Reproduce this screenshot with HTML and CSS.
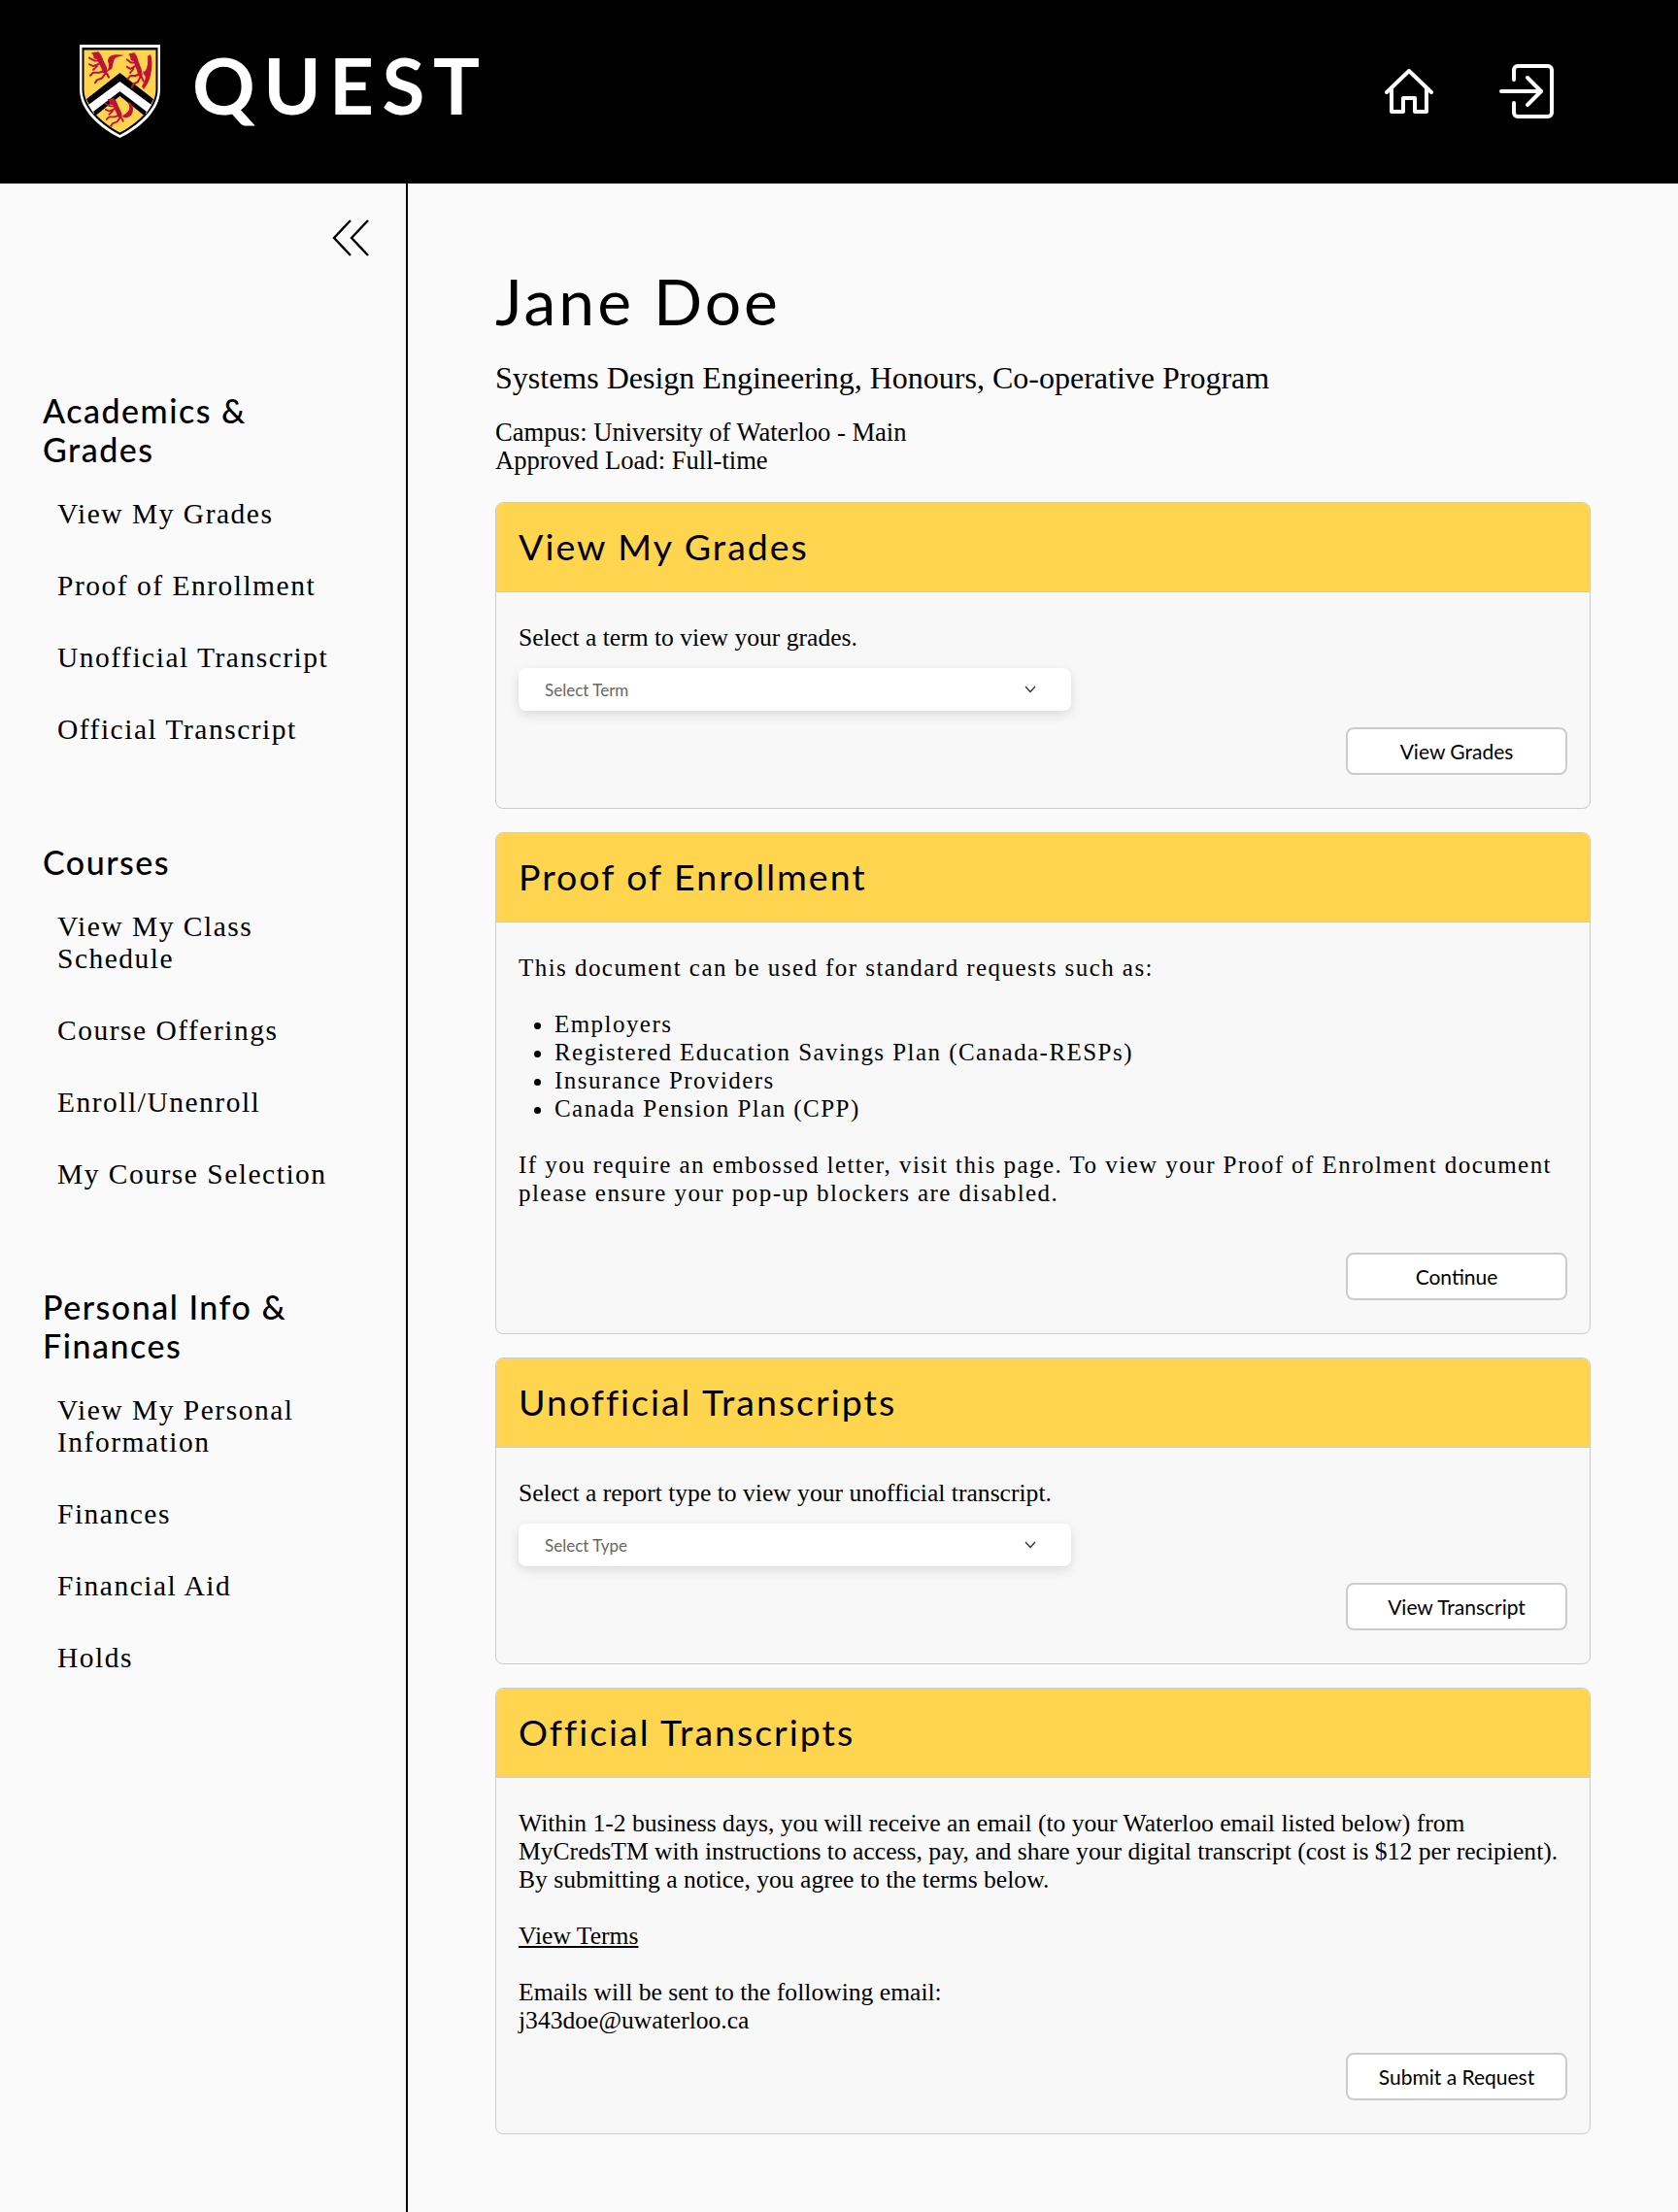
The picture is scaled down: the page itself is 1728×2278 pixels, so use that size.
FILE: index.html
```html
<!DOCTYPE html>
<html lang="en">
<head>
<meta charset="utf-8">
<title>Quest</title>
<link rel="stylesheet" href="styles.css">
</head>
<body>
<header class="topbar">
  <div class="brand">
    <svg class="crest" viewBox="0 0 83 96" width="83" height="96" aria-hidden="true">
      <defs>
        <g id="lion" fill="none" stroke="#bf1238" stroke-linecap="round" stroke-linejoin="round">
          <path d="M13 9C14 14 17 16 18 22" stroke-width="5.500"/>
          <path d="M5 3L11 2L14 6L11 9L7 8" fill="#bf1238" stroke-width="1.500"/>
          <path d="M13 11L7 11L2 8M13 14L6 17L2 15M10 17L6 21" stroke-width="2"/>
          <path d="M18 22L12 24L6 24L3 27M19 24L15 30L10 32L8 35M20 25L22 29" stroke-width="2.200"/>
        </g>
      </defs>
      <path d="M0 0H83V46C83 68 62 86 41.500 96C21 86 0 68 0 46Z" fill="#fff"/>
      <path d="M2.500 3H80.500V46C80.500 66 60 83 41.500 93C23 83 2.500 66 2.500 46Z" fill="#000"/>
      <path d="M4.500 5.500H78.500V46C78.500 65 59 81 41.500 90.500C24 81 4.500 65 4.500 46Z" fill="#ffd54f"/>
      <path d="M41.500 29L76 56L72.500 63L41.500 39L10.500 63L7 56Z" fill="#000"/>
      <path d="M41.500 38L74 62L68.500 71L41.500 49L14.500 71L9 62Z" fill="#fff"/>
      <path d="M41.500 48L69 69L66.500 73L41.500 53L16.500 73L14 69Z" fill="#000"/>
      <use href="#lion" transform="translate(8 6) scale(1 .95)"/>
      <path d="M26 29C30 26 31 22 29 17C29 12 34 9 46 11L38 13C34 15 35 21 33 25" fill="#bf1238"/>
      <use href="#lion" transform="translate(47 7) scale(.85 1.050)"/>
      <path d="M65 27C68 30 71 22 70 12L73 10C76 18 74 33 70 40L66 46L64 43C68 36 69 32 66 31Z" fill="#bf1238"/>
      <use href="#lion" transform="translate(25 54) scale(.9 .85)"/>
      <path d="M44 73C52 70 53 63 49 59C53 58 57 65 54 71C52 75 48 76 45 75Z" fill="#bf1238"/>
    </svg>
    <div class="wordmark">QUEST</div>
  </div>
  <nav class="actions">
    <svg class="icon-home" viewBox="0 0 50 46" width="50" height="46" fill="none" stroke="#fff" stroke-width="4" stroke-linecap="round" stroke-linejoin="round" aria-hidden="true">
      <path d="M2 24L25 2L48 24"/>
      <path d="M7 20V44H19V30H31V44H43V20"/>
    </svg>
    <svg class="icon-exit" viewBox="0 0 56 56" width="56" height="56" fill="none" stroke="#fff" stroke-width="4" stroke-linecap="round" stroke-linejoin="round" aria-hidden="true">
      <path d="M15 16V6A4 4 0 0 1 19 2H50A4 4 0 0 1 54 6V50A4 4 0 0 1 50 54H19A4 4 0 0 1 15 50V40"/>
      <path d="M2 28H43"/>
      <path d="M29 14L43 28L29 42"/>
    </svg>
  </nav>
</header>
<div class="layout">
  <aside class="sidebar">
    <div class="collapse">
      <svg viewBox="0 0 40 38" width="40" height="38" fill="none" stroke="#000" stroke-width="2.400" aria-hidden="true">
        <path d="M19 1L2 19L19 37"/>
        <path d="M37 1L20 19L37 37"/>
      </svg>
    </div>
    <section class="nav-group">
      <h2>Academics &amp; Grades</h2>
      <ul>
        <li>View My Grades</li>
        <li>Proof of Enrollment</li>
        <li>Unofficial Transcript</li>
        <li>Official Transcript</li>
      </ul>
    </section>
    <section class="nav-group">
      <h2>Courses</h2>
      <ul>
        <li>View My Class Schedule</li>
        <li>Course Offerings</li>
        <li>Enroll/Unenroll</li>
        <li>My Course Selection</li>
      </ul>
    </section>
    <section class="nav-group">
      <h2>Personal Info &amp; Finances</h2>
      <ul>
        <li>View My Personal Information</li>
        <li>Finances</li>
        <li>Financial Aid</li>
        <li>Holds</li>
      </ul>
    </section>
  </aside>
  <main class="content">
    <h1>Jane Doe</h1>
    <p class="program">Systems Design Engineering, Honours, Co-operative Program</p>
    <p class="meta">Campus: University of Waterloo - Main<br>Approved Load: Full-time</p>

    <section class="card">
      <h2 class="card-head">View My Grades</h2>
      <div class="card-body">
        <p class="copy lead">Select a term to view your grades.</p>
        <div class="select"><span>Select Term</span><svg viewBox="0 0 12 8" width="12" height="8" fill="none" stroke="#333" stroke-width="1.300" aria-hidden="true"><path d="M1 1L6 6.500L11 1"/></svg></div>
        <div class="row-end"><button class="btn">View Grades</button></div>
      </div>
    </section>

    <section class="card">
      <h2 class="card-head">Proof of Enrollment</h2>
      <div class="card-body">
        <p class="copy spaced">This document can be used for standard requests such as:</p>
        <ul class="copy spaced bullets">
          <li>Employers</li>
          <li>Registered Education Savings Plan (Canada-RESPs)</li>
          <li>Insurance Providers</li>
          <li>Canada Pension Plan (CPP)</li>
        </ul>
        <p class="copy spaced end">If you require an embossed letter, visit this page. To view your Proof of Enrolment document please ensure your pop-up blockers are disabled.</p>
        <div class="row-end wide"><button class="btn">Continue</button></div>
      </div>
    </section>

    <section class="card">
      <h2 class="card-head">Unofficial Transcripts</h2>
      <div class="card-body">
        <p class="copy lead">Select a report type to view your unofficial transcript.</p>
        <div class="select"><span>Select Type</span><svg viewBox="0 0 12 8" width="12" height="8" fill="none" stroke="#333" stroke-width="1.300" aria-hidden="true"><path d="M1 1L6 6.500L11 1"/></svg></div>
        <div class="row-end"><button class="btn">View Transcript</button></div>
      </div>
    </section>

    <section class="card">
      <h2 class="card-head">Official Transcripts</h2>
      <div class="card-body">
        <p class="copy">Within 1-2 business days, you will receive an email (to your Waterloo email listed below) from MyCredsTM with instructions to access, pay, and share your digital transcript (cost is $12 per recipient). By submitting a notice, you agree to the terms below.</p>
        <p class="copy"><a class="link">View Terms</a></p>
        <p class="copy end">Emails will be sent to the following email:<br>j343doe@uwaterloo.ca</p>
        <div class="row-end"><button class="btn">Submit a Request</button></div>
      </div>
    </section>
  </main>
</div>
</body>
</html>
```
FILE: styles.css
```css
* { box-sizing: border-box; }
html, body { margin: 0; padding: 0; }
body {
  background: #fafafa;
  color: #000;
  font-family: "Liberation Serif", serif;
  min-height: 2278px;
  display: flex;
  flex-direction: column;
}
.topbar {
  background: #000;
  height: 189px;
  flex: none;
  display: flex;
  justify-content: space-between;
  padding: 46px 0 0 82px;
}
.brand { display: flex; align-items: flex-start; gap: 33px; }
.wordmark {
  color: #fff;
  font-family: Lato, sans-serif;
  font-weight: 700;
  font-size: 80px;
  line-height: 80px;
  letter-spacing: 8.500px;
  margin-top: 1px;
}
.actions { display: flex; align-items: flex-start; gap: 68px; padding: 20px 128px 0 0; }
.icon-home { margin-top: 5px; }
.layout { flex: 1; display: flex; }
.sidebar {
  width: 420px;
  flex: none;
  border-right: 2px solid #000;
  padding: 37px 0 0 44px;
}
.collapse { display: flex; justify-content: flex-end; padding-right: 36px; height: 38px; margin-bottom: 139px; }
.nav-group { margin-bottom: 89px; }
.nav-group h2 {
  font-family: Lato, sans-serif;
  font-weight: 500;
  font-size: 34px;
  line-height: 40px;
  letter-spacing: 1.500px;
  margin: 0;
  width: 300px;
}
.nav-group ul { list-style: none; margin: 0; padding: 0 0 0 15px; width: 315px; }
.nav-group li {
  font-size: 29.500px;
  line-height: 33px;
  letter-spacing: 1.500px;
  padding-top: 30px;
  padding-bottom: 11px;
}
.content { flex: 1; padding: 78px 0 0 90px; }
.content > * { width: 1128px; }
h1 {
  font-family: Lato, sans-serif;
  font-weight: 400;
  font-size: 66px;
  line-height: 86px;
  letter-spacing: 3px;
  margin: 0;
}
.program { font-size: 32px; line-height: 40px; margin: 16px 0 0; }
.meta { font-size: 26.600px; line-height: 29px; margin: 22px 0 28px; }
.card {
  background: #f8f8f8;
  border: 1px solid #ccc;
  border-radius: 8px;
  margin-bottom: 24px;
  overflow: hidden;
}
.card-head {
  background: #ffd54f;
  border-bottom: 1px solid #ccc;
  height: 93px;
  margin: -1px -1px 0;
  padding: 0 24px;
  font-family: Lato, sans-serif;
  font-weight: 400;
  font-size: 37.500px;
  line-height: 92px;
  letter-spacing: 2px;
}
.card-body { padding: 32px 23px 34px; }
.copy { font-size: 25.600px; line-height: 29px; margin: 0 0 29px; }
.lead { margin-bottom: 17px; }
.end { margin-bottom: 0; }
.spaced { font-size: 25px; letter-spacing: 1.450px; }
.bullets { padding: 0 0 0 37px; }
.select {
  background: #fff;
  border-radius: 8px;
  box-shadow: 0 4px 12px rgba(0,0,0,.12);
  width: 569px;
  height: 44px;
  padding: 0 36px 0 27px;
  display: flex;
  align-items: center;
  justify-content: space-between;
  font-family: Lato, sans-serif;
  font-size: 17px;
  color: #666;
}
.row-end { display: flex; justify-content: flex-end; margin-top: 17px; }
.end + .row-end { margin-top: 19px; }
.end + .row-end.wide { margin-top: 47px; }
.btn {
  width: 228px;
  height: 49px;
  background: #fff;
  border: 2px solid #ccc;
  border-radius: 8px;
  font-family: Lato, sans-serif;
  font-size: 21px;
  color: #000;
  padding: 0;
}
.link { text-decoration: underline; }
```
